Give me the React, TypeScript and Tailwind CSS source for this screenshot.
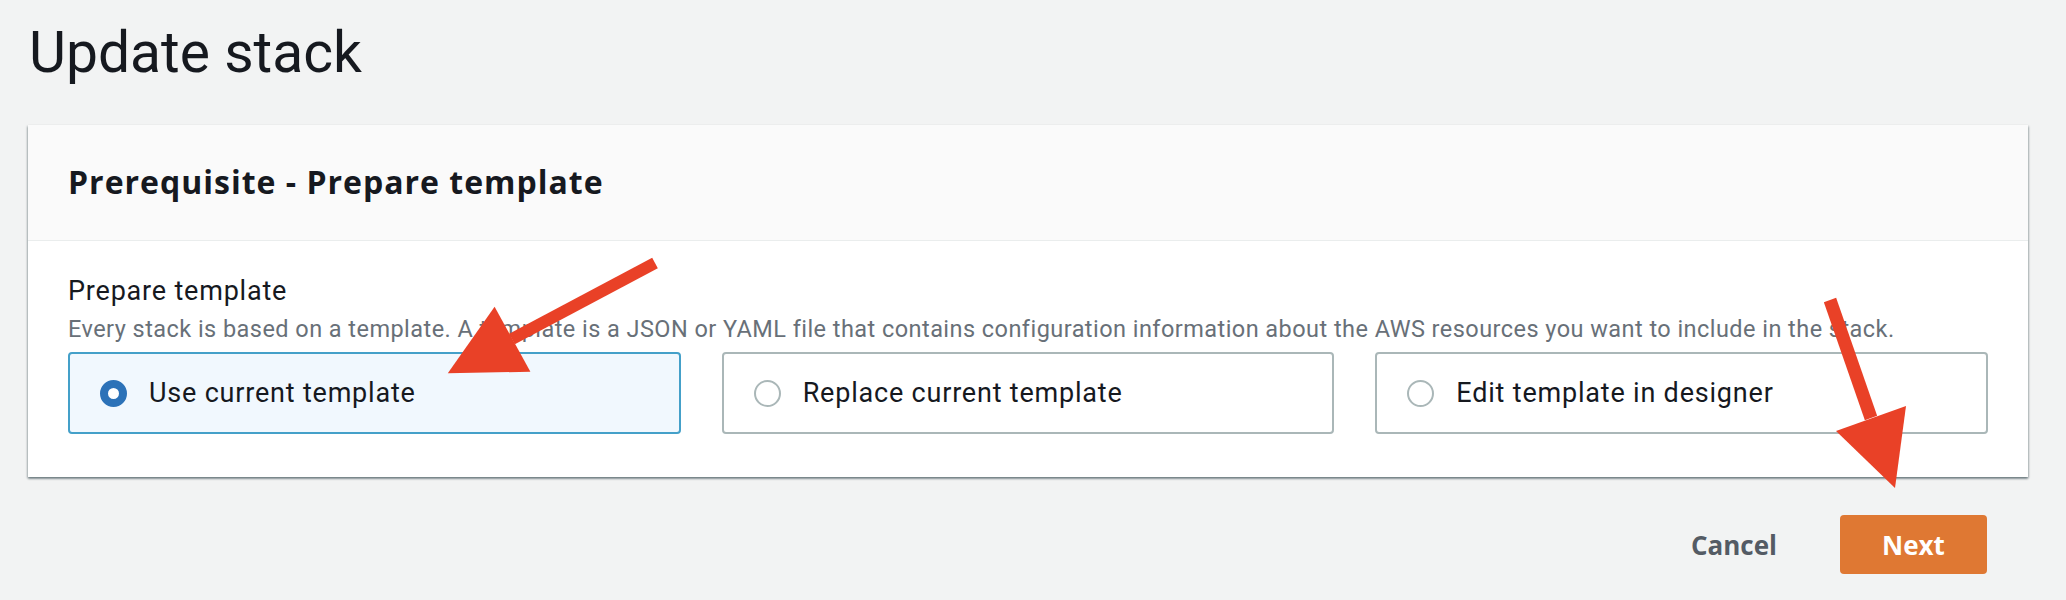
import React from "react";

const font = { fontFamily: "Roboto, 'Liberation Sans', sans-serif" };
const boldFont = { fontFamily: "'Open Sans', Roboto, 'Liberation Sans', sans-serif" };

function Radio({ checked }: { checked: boolean }) {
  return checked ? (
    <span className="box-border block h-[27px] w-[27px] shrink-0 rounded-full border-[8px] border-[#2c72b8] bg-white" />
  ) : (
    <span className="box-border block h-[27px] w-[27px] shrink-0 rounded-full border-2 border-[#aab7b8] bg-white" />
  );
}

function Tile({ label, checked }: { label: string; checked: boolean }) {
  return (
    <div
      className={
        checked
          ? "box-border flex h-[82px] items-center gap-[22px] rounded-[4px] border-2 border-[#44a0c9] bg-[#f1f8fe] pl-[30px]"
          : "box-border flex h-[82px] items-center gap-[22px] rounded-[4px] border-2 border-[#aab7b8] bg-white pl-[30px]"
      }
    >
      <Radio checked={checked} />
      <span className="text-[27px] leading-[32px] tracking-[0.8px] text-[#16191f]">{label}</span>
    </div>
  );
}

export default function App() {
  return (
    <div className="relative min-h-[600px] w-[2066px] overflow-hidden bg-[#f2f3f3] pl-[28px] pr-[38px] pt-[19px]" style={font}>
      <h1 className="pl-[1px] text-[57px] font-normal leading-[68px] text-[#16191f]">Update stack</h1>

      <div className="mt-[38px] bg-white shadow-[0_2px_2px_0_rgba(0,28,36,0.35),1px_1px_2px_0_rgba(0,28,36,0.2),-1px_1px_2px_0_rgba(0,28,36,0.2)]">
        <div className="box-border h-[116px] border-b border-[#eaeded] bg-[#fafafa] px-[40px] pt-[39px]">
          <h2 className="text-[32px] font-bold leading-[36px] tracking-[1px] text-[#16191f]" style={boldFont}>
            Prerequisite - Prepare template
          </h2>
        </div>
        <div className="px-[40px] pb-[43px] pt-[34px]">
          <div className="text-[27px] leading-[32px] tracking-[0.8px] text-[#16191f]">Prepare template</div>
          <div className="mt-[8px] text-[23.5px] leading-[28px] tracking-[0.45px] text-[#687078]">
            Every stack is based on a template. A template is a JSON or YAML file that contains configuration information about the AWS resources you want to include in the stack.
          </div>
          <div className="mt-[9px] grid grid-cols-3 gap-[41px]">
            <Tile label="Use current template" checked />
            <Tile label="Replace current template" checked={false} />
            <Tile label="Edit template in designer" checked={false} />
          </div>
        </div>
      </div>

      <div className="mt-[38px] flex items-center justify-end gap-[63px] pr-[41px]" style={boldFont}>
        <button className="text-[26px] font-bold leading-[32px] text-[#545b64]">Cancel</button>
        <button className="h-[59px] w-[147px] rounded-[4px] bg-[#df7833] text-[26px] font-bold leading-[32px] text-white">Next</button>
      </div>

      <svg className="pointer-events-none absolute left-0 top-0" width="2066" height="600" viewBox="0 0 2066 600">
        <line x1="655" y1="263" x2="512" y2="339" stroke="#e94127" strokeWidth="12" />
        <polygon points="494.6,306.7 447.8,373.3 530.4,371.7" fill="#e94127" />
        <line x1="1830" y1="300" x2="1871" y2="418" stroke="#e94127" strokeWidth="13" />
        <polygon points="1836,431 1906,406 1895,488" fill="#e94127" />
      </svg>
    </div>
  );
}
